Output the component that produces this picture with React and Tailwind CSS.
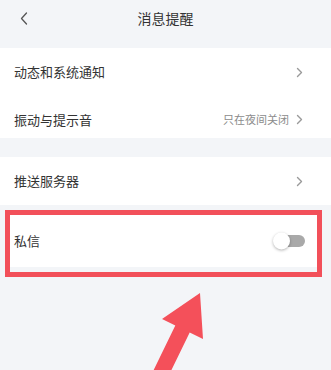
import React, { useState } from "react";

const Chevron = ({ className = "" }) => (
  <svg width="7" height="11" viewBox="0 0 7 11" className={className}>
    <polyline points="1.5,1.5 5.5,5.5 1.5,9.5" fill="none" stroke="#9a9a9a" strokeWidth="1.4" strokeLinecap="round" strokeLinejoin="round" />
  </svg>
);

const Row = ({ label, value, height = "h-[48px]" }) => (
  <div className={`flex items-center justify-between pl-[14px] pr-[28px] ${height}`}>
    <span className="text-[13px] text-[#333]">{label}</span>
    <div className="flex items-center gap-[7px]">
      {value && <span className="text-[11px] text-[#8c8c8c]">{value}</span>}
      <Chevron />
    </div>
  </div>
);

const App = () => {
  const [on, setOn] = useState(false);

  return (
    <div
      className="relative w-[331px] h-[370px] overflow-hidden bg-[#f3f5f8]"
      style={{ fontFamily: '"Noto Sans CJK SC", "Noto Sans", sans-serif' }}
    >
      <div className="flex items-center h-[48px] pb-[12px]">
        <div className="w-[60px] pl-[20px] flex items-center">
          <svg width="8" height="13" viewBox="0 0 8 13">
            <polyline points="6.5,1 1.5,6.5 6.5,12" fill="none" stroke="#555" strokeWidth="1.3" strokeLinecap="round" strokeLinejoin="round" />
          </svg>
        </div>
        <div className="flex-1 text-center text-[14px] text-[#333]">消息提醒</div>
        <div className="w-[60px]" />
      </div>

      <div className="bg-white">
        <Row label="动态和系统通知" />
        <Row label="振动与提示音" value="只在夜间关闭" height="h-[42px] pt-[5px]" />
      </div>

      <div className="h-[19px]" />

      <div className="bg-white">
        <Row label="推送服务器" />
      </div>

      <div className="h-[5px]" />

      <div className="ml-[5px] w-[317px] border-[5px] border-[#f2505a] bg-[#f3f5f8]">
        <div className="flex items-center justify-between h-[52px] bg-white pl-[4px] pr-[12px]">
          <span className="text-[13px] text-[#333]">私信</span>
          <button
            onClick={() => setOn(!on)}
            className={`relative w-[30px] h-[12px] rounded-full ${on ? "bg-[#3a8df5]" : "bg-[#a9a9a9]"}`}
          >
            <span
              className={`absolute top-1/2 -translate-y-1/2 w-[17px] h-[17px] rounded-full bg-white shadow-[0_1px_3px_rgba(0,0,0,0.3)] ${on ? "left-[14px]" : "left-[-2px]"}`}
            />
          </button>
        </div>
        <div className="h-[5px]" />
      </div>

      <svg className="absolute left-0 top-0" width="331" height="370" viewBox="0 0 331 370">
        <polygon
          points="200,293 203,339 189.7,332.5 164.9,383.5 150.5,376.5 175.3,325.5 162,319"
          fill="#f4505a"
        />
      </svg>
    </div>
  );
};

export default App;
